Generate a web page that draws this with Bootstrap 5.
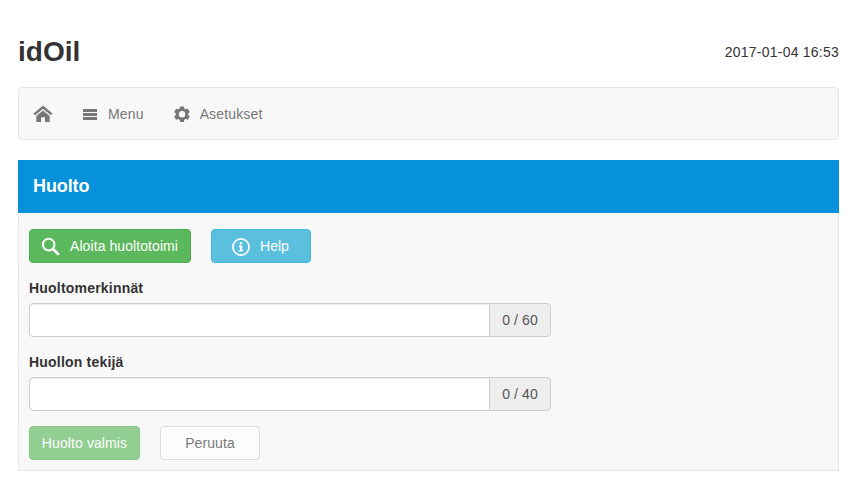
<!DOCTYPE html>
<html lang="fi">
<head>
<meta charset="utf-8">
<meta name="viewport" content="width=device-width, initial-scale=1">
<title>idOil</title>
<link rel="stylesheet" href="https://cdn.jsdelivr.net/npm/bootstrap@5.3.0/dist/css/bootstrap.min.css">
<style>
body{font-family:"Liberation Sans",Arial,sans-serif;font-size:14px;line-height:20px;color:#333;background:#fff}
.page{padding:35px 14px 0 18px}
.brand-title{font-size:28px;line-height:33px;font-weight:700;color:#333}
.clock{letter-spacing:.23px}
.topnav{height:53px;margin-top:19px;background:#f8f8f8;border:1px solid #e7e7e7;border-radius:4px;padding:0 14px;gap:29px}
.topnav .nav-link{color:#777;padding:0;letter-spacing:.15px}
.panel{margin-top:20px;height:311px;background:#f8f8f8;border:1px solid #e7e7e7;border-top:0}
.panel-title{height:53px;margin:0 -1px;padding:0 15px 2px;background:#0691da;color:#fff;font-size:18px;font-weight:700;letter-spacing:-.1px}
.panel-content{padding:16px 10px 0}
.btn-row{gap:20px}
.field,.btn-row-end{margin-top:15px}
.btn{--bs-btn-font-size:14px;--bs-btn-line-height:20px;--bs-btn-padding-x:12px;--bs-btn-padding-y:6px;--bs-btn-border-radius:4px;height:34px}
.btn-start{--bs-btn-bg:#5cb85c;--bs-btn-border-color:#4cae4c;--bs-btn-color:#fff;--bs-btn-padding-x:11px;width:162px;letter-spacing:.08px}
.btn-help{--bs-btn-bg:#5bc0de;--bs-btn-border-color:#46b8da;--bs-btn-color:#fff;width:100px;padding-right:14px}
.btn-done{--bs-btn-disabled-bg:#5cb85c;--bs-btn-disabled-border-color:#4cae4c;--bs-btn-disabled-color:#fff;width:111px;letter-spacing:.1px}
.btn-cancel{--bs-btn-disabled-bg:#fff;--bs-btn-disabled-border-color:#ccc;--bs-btn-disabled-color:#333;width:100px;letter-spacing:.1px}
.form-label{font-weight:700;line-height:20px;margin:0 0 5px;letter-spacing:.2px}
.input-group{width:522px;height:34px}
.input-group>.form-control{height:34px;min-height:0;padding:6px 12px;font-size:14px;line-height:20px;border-color:#ccc;border-radius:4px;box-shadow:inset 0 1px 1px rgba(0,0,0,.075)}
.input-group-text{width:62px;height:34px;padding:0;font-size:14px;line-height:20px;background:#eee;border-color:#ccc;color:#555;border-radius:4px;letter-spacing:.1px}
svg{flex:none}
.icon-gap{margin-right:9px}
</style>
</head>
<body>
<div class="page">
  <header class="d-flex justify-content-between align-items-center">
    <h1 class="brand-title mb-0">idOil</h1>
    <span class="clock">2017-01-04 16:53</span>
  </header>
  <nav class="topnav d-flex align-items-center">
    <a class="nav-link d-flex" href="#" aria-label="Home">
      <svg width="20" height="20" viewBox="0 0 20 20"><path d="M1.3 10.4 10 3.2l8.7 7.2" fill="none" stroke="#777" stroke-width="2.5"/><path d="M10 6.4 16.7 12V18H12v-4.8H8.2V18H3.3v-6z" fill="#777"/></svg>
    </a>
    <a class="nav-link d-flex align-items-center" href="#">
      <svg class="icon-gap" width="17" height="21" viewBox="0 0 17 21"><path d="M1 6h14v3H1zm0 4h14v3H1zm0 4h14v3H1z" fill="#777"/></svg>Menu
    </a>
    <a class="nav-link d-flex align-items-center" href="#">
      <svg width="18" height="20" viewBox="1 0 18 20" class="icon-gap"><path d="M8.2 2.5h3.6l.6 2.1 1.2.7 2.3-.6 1.9 3.2-1.7 1.7v1.2l1.7 1.7-1.9 3.2-2.3-.6-1.2.7-.6 2.1H8.2l-.6-2.1-1.2-.7-2.3.6-1.9-3.2 1.7-1.7V9.6L2.2 7.9l1.9-3.2 2.3.6 1.2-.7zM10 7a3.2 3.2 0 1 0 0 6.4A3.2 3.2 0 0 0 10 7z" fill="#777" fill-rule="evenodd"/></svg>Asetukset
    </a>
  </nav>
  <main class="panel">
    <div class="panel-title d-flex align-items-center">Huolto</div>
    <div class="panel-content">
      <div class="d-flex btn-row">
        <button class="btn btn-start d-flex align-items-center" type="button">
          <svg class="icon-gap" width="20" height="20" viewBox="0 0 20 20"><circle cx="7.7" cy="8.6" r="5.8" fill="none" stroke="#fff" stroke-width="2"/><path d="m12 13 5.8 5.7" stroke="#fff" stroke-width="2.8"/></svg><span class="text-nowrap">Aloita huoltotoimi</span>
        </button>
        <button class="btn btn-help d-flex align-items-center justify-content-center" type="button">
          <svg class="icon-gap" width="20" height="20" viewBox="0 0 20 20"><circle cx="10" cy="11" r="8.1" fill="none" stroke="#fff" stroke-width="1.7"/><path d="M8.8 6.2h2.4v2.2H8.8zM7.8 9.4h3.4v4.8h1.2v1.4H7.7v-1.4h1.2v-3.4H7.8z" fill="#fff"/></svg><span>Help</span>
        </button>
      </div>
      <div class="field">
        <label class="form-label d-block" for="notes">Huoltomerkinnät</label>
        <div class="input-group"><input class="form-control" id="notes" type="text"><span class="input-group-text justify-content-center">0 / 60</span></div>
      </div>
      <div class="field">
        <label class="form-label d-block" for="worker">Huollon tekijä</label>
        <div class="input-group"><input class="form-control" id="worker" type="text"><span class="input-group-text justify-content-center">0 / 40</span></div>
      </div>
      <div class="d-flex btn-row btn-row-end">
        <button class="btn btn-done px-0" type="button" disabled>Huolto valmis</button>
        <button class="btn btn-cancel" type="button" disabled>Peruuta</button>
      </div>
    </div>
  </main>
</div>
<script src="https://cdn.jsdelivr.net/npm/bootstrap@5.3.0/dist/js/bootstrap.bundle.min.js"></script>
</body>
</html>
